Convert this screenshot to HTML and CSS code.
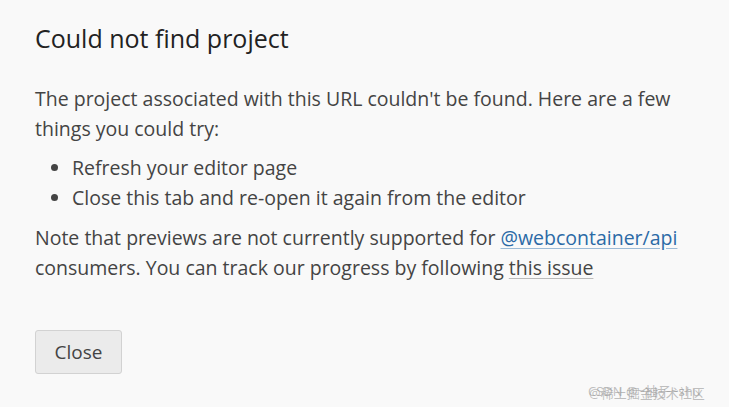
FILE: index.html
```html
<!DOCTYPE html>
<html>
<head>
<meta charset="utf-8">
<link rel="stylesheet" href="styles.css">
</head>
<body>
<main class="dialog">
  <h1 class="title">Could not find project</h1>
  <p class="text">The project associated with this URL couldn't be found. Here are a few things you could try:</p>
  <ul class="list">
    <li>Refresh your editor page</li>
    <li>Close this tab and re-open it again from the editor</li>
  </ul>
  <p class="text">Note that previews are not currently supported for <a class="link" href="#">@webcontainer/api</a> consumers. You can track our progress by following <a class="link-plain" href="#">this issue</a></p>
  <div class="actions"><button class="btn">Close</button></div>
</main>
<div class="watermark"><span class="wm wm-a">CSDN @~柚子~shu</span><span class="wm wm-b">@稀土掘金技术社区</span></div>
</body>
</html>
```
FILE: styles.css
```css
html, body {
  margin: 0;
  padding: 0;
  background: #f9f9f9;
  width: 729px;
  height: 407px;
  overflow: hidden;
}
body {
  font-family: "Open Sans", "Noto Sans CJK SC", sans-serif;
  color: #444;
  position: relative;
}
.dialog {
  padding: 21px 35px 0 35px;
  width: 660px;
}
.title {
  margin: 0 0 29px 0;
  font-size: 25px;
  font-weight: 400;
  color: #222;
  line-height: 34px;
}
.text {
  margin: 0;
  font-size: 19.5px;
  line-height: 29.5px;
}
.list {
  margin: 10px 0 11px 0;
  padding-left: 37px;
  font-size: 19.5px;
  line-height: 29.5px;
}
.link {
  color: #2b6aa6;
  text-decoration: underline;
  text-decoration-color: #9bbad6;
  text-underline-offset: 3px;
}
.link-plain {
  color: #444;
  text-decoration: underline;
  text-decoration-color: #bbb;
  text-underline-offset: 3px;
}
.actions {
  display: flex;
  margin-top: 48px;
}
.btn {
  font-family: inherit;
  font-size: 19px;
  color: #444;
  background: #ebebeb;
  border: 1px solid #d2d2d2;
  border-radius: 3px;
  width: 87px;
  height: 44px;
  padding: 0;
}
.watermark {
  position: absolute;
  left: 588px;
  top: 381px;
  font-size: 13px;
  color: rgba(150,150,150,0.6);
}
.wm { position: absolute; left: 0; top: 0; white-space: nowrap; }
.wm-b { left: 1px; top: 2px; }
```
